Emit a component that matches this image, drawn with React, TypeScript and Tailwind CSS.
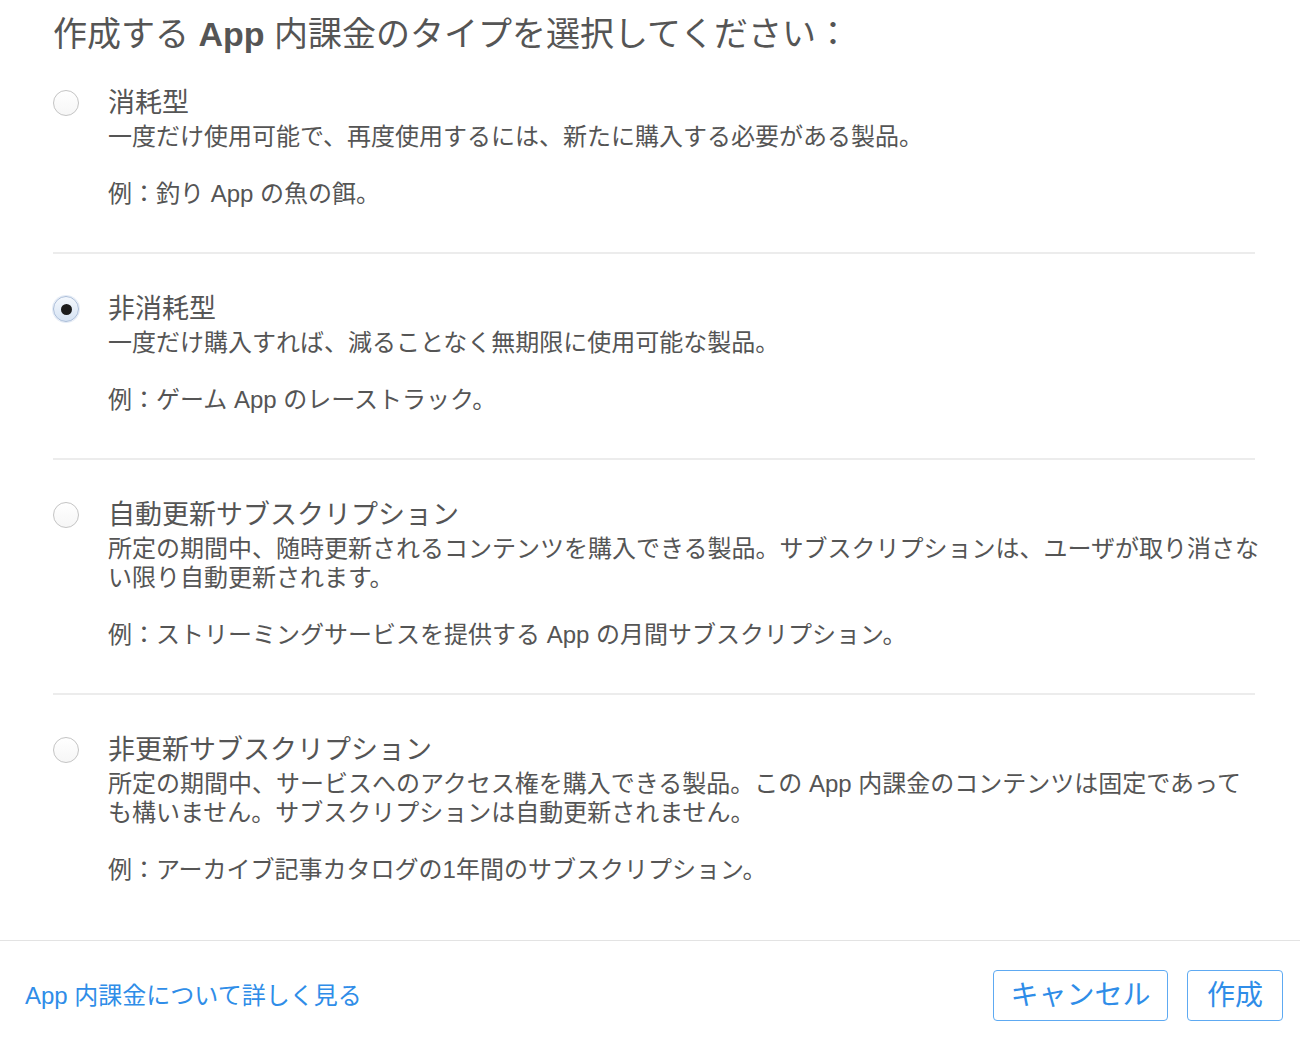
import React, { useState } from 'react';

interface Option {
  id: string;
  title: string;
  description: string;
  example: string;
}

const options: Option[] = [
  {
    id: 'consumable',
    title: '消耗型',
    description: '一度だけ使用可能で、再度使用するには、新たに購入する必要がある製品。',
    example: '例：釣り App の魚の餌。',
  },
  {
    id: 'non-consumable',
    title: '非消耗型',
    description: '一度だけ購入すれば、減ることなく無期限に使用可能な製品。',
    example: '例：ゲーム App のレーストラック。',
  },
  {
    id: 'auto-renewable',
    title: '自動更新サブスクリプション',
    description:
      '所定の期間中、随時更新されるコンテンツを購入できる製品。サブスクリプションは、ユーザが取り消さない限り自動更新されます。',
    example: '例：ストリーミングサービスを提供する App の月間サブスクリプション。',
  },
  {
    id: 'non-renewing',
    title: '非更新サブスクリプション',
    description:
      '所定の期間中、サービスへのアクセス権を購入できる製品。この App 内課金のコンテンツは固定であっても構いません。サブスクリプションは自動更新されません。',
    example: '例：アーカイブ記事カタログの1年間のサブスクリプション。',
  },
];

function Radio({ checked }: { checked: boolean }) {
  if (checked) {
    return (
      <span className="mt-[3px] flex h-[26px] w-[26px] shrink-0 items-center justify-center rounded-full border border-[#a9bcd8] bg-gradient-to-b from-[#f4f8fd] to-[#d6e3f3] shadow-[0_0_0_1px_rgba(180,200,230,0.35)]">
        <span className="h-[11px] w-[11px] rounded-full bg-[#1c1c1c]" />
      </span>
    );
  }
  return (
    <span className="mt-[3px] block h-[26px] w-[26px] shrink-0 rounded-full border border-[#c4c4c4] bg-gradient-to-b from-white to-[#f6f6f6]" />
  );
}

export default function App() {
  const [selected, setSelected] = useState('non-consumable');

  return (
    <div
      className="flex min-h-[1038px] w-[1300px] flex-col bg-white text-[#555555]"
      style={{ fontFamily: '"Liberation Sans", "Noto Sans CJK JP", sans-serif' }}
    >
      <div className="pl-[53px] pr-[45px] pt-[14px]">
        <h1 className="text-[34px] font-normal leading-[41px] text-[#555555]">
          作成する <span className="font-bold">App</span> 内課金のタイプを選択してください：
        </h1>

        {options.map((opt, i) => (
          <div
            key={opt.id}
            className={
              i === 0
                ? 'pt-[32px] pb-[44px]'
                : i === options.length - 1
                ? 'border-t-2 border-[#ececec] pt-[39px] pb-[56px]'
                : 'border-t-2 border-[#ececec] pt-[39px] pb-[44px]'
            }
          >
            <label
              className="flex cursor-pointer items-start gap-[29px]"
              onClick={() => setSelected(opt.id)}
            >
              <Radio checked={selected === opt.id} />
              <div className="-mr-[8px] flex-1">
                <div className="text-[27px] leading-[32px]">{opt.title}</div>
                <p className="mt-[3px] text-[24px] leading-[29px]">{opt.description}</p>
                <p className="mt-[28px] text-[24px] leading-[29px]">{opt.example}</p>
              </div>
            </label>
          </div>
        ))}
      </div>

      <div className="flex items-center justify-between border-t border-[#e3e3e3] pl-[25px] pr-[17px] pt-[29px] pb-[17px]">
        <a href="#" className="text-[24px] leading-[30px] text-[#2f8de8]">
          App 内課金について詳しく見る
        </a>
        <div className="flex gap-[19px]">
          <button className="h-[51px] w-[175px] rounded-[4px] border-[1.5px] border-[#5eaaf2] text-[28px] text-[#2f8de8]">
            キャンセル
          </button>
          <button className="h-[51px] w-[96px] rounded-[4px] border-[1.5px] border-[#5eaaf2] text-[28px] text-[#2f8de8]">
            作成
          </button>
        </div>
      </div>
    </div>
  );
}
